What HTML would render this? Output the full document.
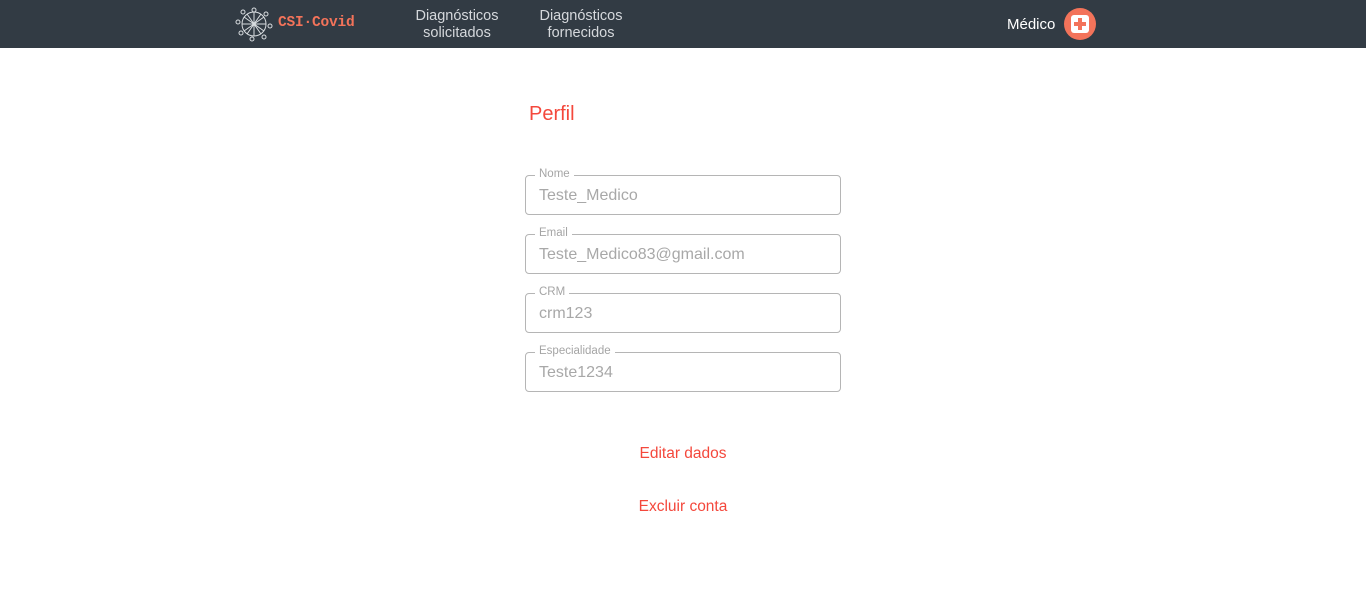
<!DOCTYPE html>
<html><head><meta charset="utf-8"><style>
body{margin:0;width:1366px;height:613px;background:#fff;font-family:"Liberation Sans",sans-serif;position:relative;overflow:hidden}
.nav{position:absolute;left:0;top:0;width:1366px;height:48px;background:#323b44}
.logo{position:absolute;left:278px;top:15px;color:#f3735a;font-family:"Liberation Mono",monospace;font-weight:bold;font-size:14.5px;letter-spacing:-0.2px}
.link{position:absolute;top:8px;color:#d5d8dc;font-size:14.5px;text-align:center;line-height:17px}
.med{position:absolute;left:1007px;top:16px;color:#fff;font-size:15px}
.av{position:absolute;left:1064px;top:8px;width:32px;height:32px;border-radius:50%;background:#f3735a}
.av .sq{position:absolute;left:7px;top:7px;width:18px;height:18px;background:#fff;border-radius:3px}
.av .h{position:absolute;left:10px;top:14px;width:12px;height:4px;background:#f3735a}
.av .v{position:absolute;left:14px;top:10px;width:4px;height:12px;background:#f3735a}
h1{position:absolute;left:529px;top:103px;margin:0;font-weight:normal;font-size:20px;color:#f4483c}
.f{position:absolute;left:525px;width:314px;height:38px;border:1px solid #b5b5b5;border-radius:4px}
.f span{position:absolute;left:9px;top:-8px;background:#fff;padding:0 4px;font-size:11.5px;color:#a5a5a5}
.f div{position:absolute;left:13px;top:11px;font-size:16px;color:#a8a8a8}
.b{position:absolute;width:1366px;left:0;text-align:center;color:#f4483c;font-size:15.5px}
</style></head><body>
<div class="nav">
<svg style="position:absolute;left:235px;top:6px" width="38" height="36" viewBox="0 0 38 36" fill="none" stroke="#d8dcdf" stroke-width="1">
<circle cx="19" cy="18" r="12"/><path d="M9 11L29 25M9 25L29 11M19 6L19 30M7 18H31M12 8L26 28M26 8L12 28"/>
<circle cx="19" cy="4" r="2"/><circle cx="31" cy="8" r="2"/><circle cx="35" cy="20" r="2"/><circle cx="29" cy="31" r="2"/><circle cx="17" cy="33" r="2"/><circle cx="6" cy="27" r="2"/><circle cx="3" cy="16" r="2"/><circle cx="8" cy="6" r="2"/>
</svg>
<div class="logo">CSI·Covid</div>
<div class="link" style="left:408px;width:98px">Diagnósticos<br>solicitados</div>
<div class="link" style="left:532px;width:98px">Diagnósticos<br>fornecidos</div>
<div class="med">Médico</div>
<div class="av"><div class="sq"></div><div class="h"></div><div class="v"></div></div>
</div>
<h1>Perfil</h1>
<div class="f" style="top:175px"><span>Nome</span><div>Teste_Medico</div></div>
<div class="f" style="top:234px"><span>Email</span><div>Teste_Medico83@gmail.com</div></div>
<div class="f" style="top:293px"><span>CRM</span><div>crm123</div></div>
<div class="f" style="top:352px"><span>Especialidade</span><div>Teste1234</div></div>
<div class="b" style="top:445px">Editar dados</div>
<div class="b" style="top:498px">Excluir conta</div>
</body></html>
